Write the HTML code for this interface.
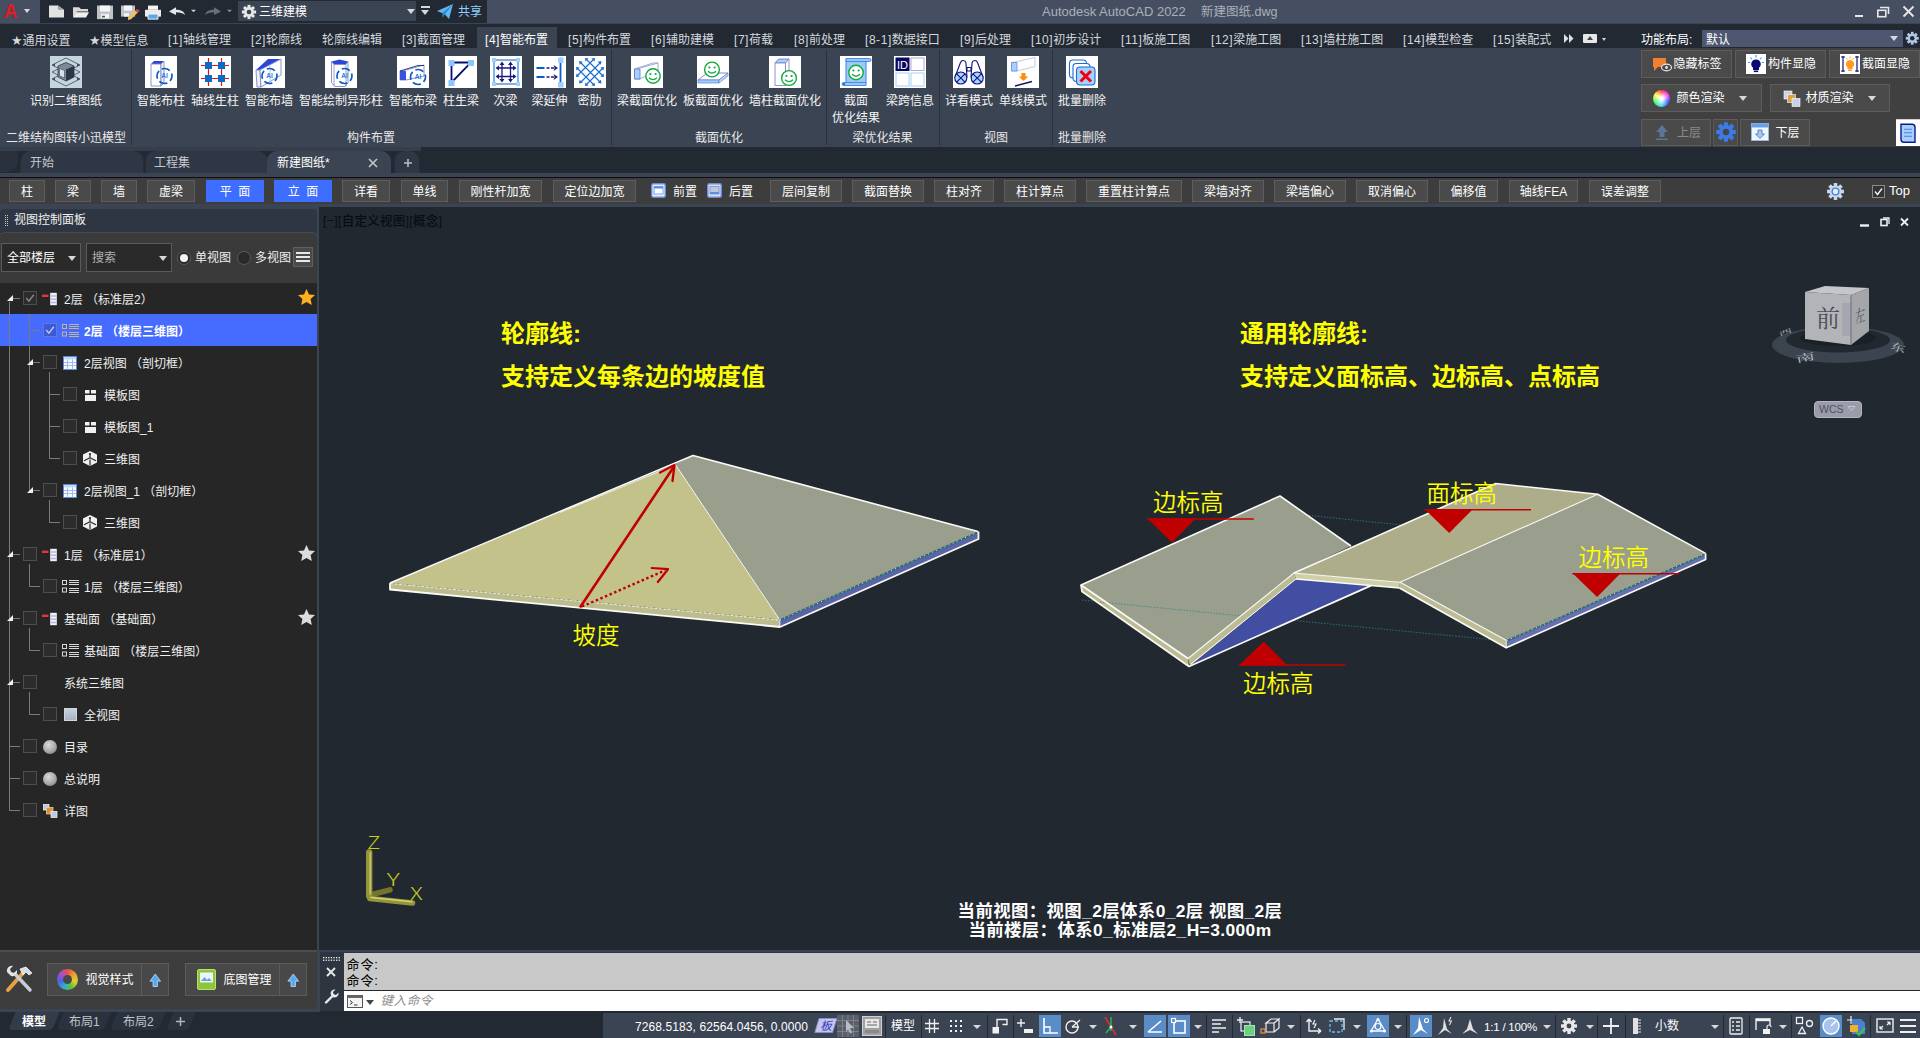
<!DOCTYPE html>
<html lang="zh-CN"><head><meta charset="utf-8"><title>Autodesk AutoCAD 2022 - 新建图纸.dwg</title>
<style>
*{margin:0;padding:0;box-sizing:border-box}
html,body{width:1920px;height:1038px;overflow:hidden;background:#212830}
body{font-family:"Liberation Sans","Noto Sans CJK SC",sans-serif;font-size:12px;color:#fff;position:relative}
.abs{position:absolute;display:block}
.t{position:absolute;white-space:nowrap;line-height:16px;font-size:13px}
i.tri{position:absolute;width:0;height:0;border-left:4.500px solid transparent;border-right:4.500px solid transparent;border-top:5px solid #d8d8d8}
i.tri.s{border-left-width:4px;border-right-width:4px;border-top-width:4.500px}
i.tri.dk{border-top-color:#444}
/* title */
#title{position:absolute;left:0;top:0;width:1920px;height:24px;background:#464f61;border-bottom:1px solid #3b4453}
.abtn{position:absolute;left:0;top:0;width:40px;height:23px;background:#464f61}
.alogo{position:absolute;left:4px;top:-2.500px;font-size:21px;font-weight:bold;color:#d8222c;line-height:26px;transform:scaleX(.9);transform-origin:left;text-shadow:0 0 1px #8a1018}
.qat{position:absolute;left:40px;top:0;width:447px;height:23px;background:#222933}
.wscombo{position:absolute;left:238px;top:1px;width:178px;height:20px;background:#3b4453}
/* tabs */
#tabs{position:absolute;left:0;top:24px;width:1920px;height:24px;background:#222933}
.tab{position:absolute;top:7.500px;font-size:12px;line-height:16px;white-space:nowrap;color:#d4d8de}
.tab.act{color:#fff}
.tab b.lp{font-weight:normal;letter-spacing:.55px}
.tab b.st{font-weight:normal;font-size:10.500px;display:inline-block;width:11.500px;text-align:center;vertical-align:1px}
.acttab{position:absolute;top:3px;height:21px;background:#3b4453}
/* ribbon */
#ribbon{position:absolute;left:0;top:48px;width:1920px;height:99px;background:#3b4453}
.rsep{position:absolute;top:2px;width:1px;height:95px;background:#2b323e}
.rl{position:absolute;top:44.800px;width:120px;text-align:center;font-size:12px;line-height:17px;color:#f4f4f4;white-space:nowrap}
.rl.pt{top:82.300px;width:140px;color:#e8e8e8}
.rp{position:absolute;left:1639.500px;top:0;width:280.500px;height:99px;background:#404040}
.rb{position:absolute;background:#4a4a4a;border:1px solid #5c5c5c}
.bt{position:absolute;font-size:12px;line-height:16px;color:#fff;white-space:nowrap}
/* doc tabs */
#doctabs{position:absolute;left:0;top:147px;width:1920px;height:30px;background:#222933;border-top:4px solid #222933;border-bottom:4px solid #3b4453}
.dtab{position:absolute;top:0;height:22px;background:#2f3744;border-radius:10px 10px 0 0;box-shadow:inset 1px 0 0 #272d38,inset -1px 0 0 #272d38}
.dtab.on{background:#3b4453;box-shadow:none}
.dtab span{position:absolute;top:3.800px;font-size:12px;line-height:16px;color:#c4c8d0;white-space:nowrap}
/* toolbar */
#tb{position:absolute;left:0;top:177px;width:1920px;height:31px;background:#3d3d3d;border-top:1.200px solid #0c0e12;border-bottom:4.800px solid #3b4453}
.tbb{position:absolute;top:1.500px;height:22.800px;background:#4a4a4a;border:1px solid #5e5e5e;font-size:12px;line-height:22.200px;text-align:center;color:#fff;white-space:nowrap}
.tbb.on{background:#3d6eff;border-color:#3d6eff}
.tbt{position:absolute;top:6.300px;font-size:12px;line-height:16px;color:#fff;white-space:nowrap}
/* left */
#left{position:absolute;left:0;top:208px;width:319.500px;height:803.500px;background:#3b4453;border-right:2.500px solid #3b4453}
.lhead{position:absolute;left:0;top:0.500px;width:316.500px;height:24px;background:#2f3643;border-radius:4px 4px 0 0}
.grip{position:absolute;left:5px;top:6.500px;width:1.200px;height:11px;background:repeating-linear-gradient(#c8c8c8 0 1.200px,transparent 1.200px 2px);box-shadow:none}
.grip:after{content:'';position:absolute;left:2.200px;top:0;width:1.200px;height:11px;background:repeating-linear-gradient(#c8c8c8 0 1.200px,transparent 1.200px 2px)}
.lctl{position:absolute;left:0;top:24px;width:316.500px;height:51px;background:#3a3a3a;border-radius:5px 5px 0 0;border-top:1px solid #4a4a4a}
.cmb{position:absolute;top:10px;height:29px;background:#2a2a2a;border:1px solid #5a5a5a}
.cmb span{position:absolute;left:5px;top:6px;font-size:12px;line-height:16px;color:#fff;white-space:nowrap}
.tree{position:absolute;left:0;top:75px;width:316.500px;height:667px;background:#262626;overflow:hidden}
.cb{position:absolute;width:14px;height:14px;background:#2c2c2c;border:1px solid #4e4e4e}
.tt{position:absolute;font-size:12px;line-height:17px;color:#f0f0f0;white-space:nowrap}
.lbot{position:absolute;left:0;top:742px;width:316.500px;height:58.500px;background:#3c3c3c;border-top:2px solid #4c4c4c;border-radius:0 0 4px 4px}
.lbb{position:absolute;top:11px;height:33px;background:#484848;border:1px solid #5c5c5c}
/* viewport */
#vp{position:absolute;left:319px;top:207px;width:1601px;height:743px;background:#212830;overflow:hidden}
/* cmd */
#cmd{position:absolute;left:319.500px;top:950px;width:1600.500px;height:61.500px;background:#2e3541;border-top:2.500px solid #3b4453;border-bottom:1px solid #222933}
.hist{position:absolute;left:24px;top:.5px;width:1577px;height:37px;background:#c8c8c8}
.inp{position:absolute;left:24px;top:37.500px;width:1577px;height:21px;background:#fff;border-top:1px solid #222933}
/* status */
#status{position:absolute;left:0;top:1011.500px;width:1920px;height:27px;background:#222933}
.mtab{position:absolute;top:.5px;height:17.500px;background:#2b323e;transform:skewX(-22deg);border-radius:0 0 4px 4px}
.mtab.on{background:#343c4a}
.sb{position:absolute;left:603px;top:1px;width:1317px;height:26px;background:#3b4453}
.vs{position:absolute;top:3px;width:1px;height:23px;background:#222933}

</style></head>
<body>
<div id="title">
<div class="abtn"><span class="alogo">A</span><i class="tri s" style="left:24px;top:9px;border-left-width:3.500px;border-right-width:3.500px"></i></div>
<div class="qat"></div>
<svg class="abs" style="left:48px;top:2.500px" width="200" height="17" viewBox="0 0 200 20" preserveAspectRatio="none">
<path d="M1 3h9l6 5v9H1z" fill="#e2e2e2"/><path d="M10 3v5h6z" fill="#9aa0a8"/>
<path d="M25 5h6l2 2h7v3H29l-4 7z" fill="#d8d8d8"/><path d="M28 11h13l-3 6H25z" fill="#efefef"/>
<path d="M49 3h16v16H49z" fill="#bfc3c8"/><path d="M52 3h10v7H52z" fill="#f4f4f4"/><path d="M53 13h8v5h-8z" fill="#f4f4f4"/><path d="M54 15h3v2h-3z" fill="#555"/>
<path d="M73 3h14v13H73z" fill="#bfc3c8"/><path d="M76 3h8v6h-8z" fill="#f4f4f4"/><path d="M76 12h5v4h-5z" fill="#f4f4f4"/><path d="M80 17l7-8 3 2-7 8-3 1z" fill="#f0c060"/><path d="M87 9l2-2 3 2-2 2z" fill="#e04848"/>
<path d="M100 3h10v5h-10z" fill="#f4f4f4"/><path d="M97 8h16v8H97z" fill="#ececec"/><path d="M100 13h10v6h-10z" fill="#5aa8e8" stroke="#f4f4f4" stroke-width="1"/>
<path d="M121 10l7-5v3c5 0 8 2 9 6-2-2-5-3-9-3v3z" fill="#e6e6e6"/>
<path d="M143 8h5l-2.500 3z" fill="#cfcfcf"/>
<path d="M173 10l-7-5v3c-5 0-8 2-9 6 2-2 5-3 9-3v3z" fill="#6a707a"/>
<path d="M179 8h5l-2.500 3z" fill="#8a8f98"/>
</svg>
<div class="wscombo"></div>
<svg class="abs" style="left:240.500px;top:3.500px" width="16" height="16" viewBox="0 0 18 18"><g fill="#e8e8e8"><circle cx="9" cy="9" r="5.500"/><g id="gt"><rect x="7.300" y="1" width="3.400" height="16"/></g><use href="#gt" transform="rotate(45 9 9)"/><use href="#gt" transform="rotate(90 9 9)"/><use href="#gt" transform="rotate(135 9 9)"/></g><circle cx="9" cy="9" r="2.600" fill="#3b4453"/></svg>
<span class="t" style="left:259px;top:4px;color:#fff;font-size:12px">三维建模</span>
<i class="tri" style="left:407px;top:9px"></i>
<i class="abs" style="left:421px;top:6px;width:9px;height:1.500px;background:#d8d8d8"></i><i class="tri" style="left:421px;top:10px"></i>
<svg class="abs" style="left:436px;top:3px" width="18" height="17" viewBox="0 0 18 17"><path d="M1 8L17 1l-4 15-4.500-5z" fill="#5fb6f2"/><path d="M17 1L6.500 10v5l2.300-3.700z" fill="#2f86c8"/></svg>
<span class="t" style="left:458px;top:4px;color:#8fd0ff;font-size:12px">共享</span>
<span class="t" style="left:1042px;top:4px;color:#a8afba;letter-spacing:0;font-size:13px">Autodesk AutoCAD 2022</span>
<span class="t" style="left:1201px;top:4px;color:#a8afba;font-size:12.500px">新建图纸.dwg</span>
<i class="abs" style="left:1855px;top:15px;width:8px;height:2px;background:#e8e8e8"></i>
<svg class="abs" style="left:1876px;top:6px" width="14" height="12" viewBox="0 0 14 12"><path d="M4 1.500h8.500v6.500" fill="none" stroke="#e8e8e8" stroke-width="1.600"/><rect x="1.800" y="4.300" width="8" height="6.400" fill="none" stroke="#e8e8e8" stroke-width="1.600"/></svg>
<svg class="abs" style="left:1902px;top:5px" width="13" height="13" viewBox="0 0 13 13"><path d="M1.500 1.500l10 10M11.500 1.500l-10 10" stroke="#e8e8e8" stroke-width="1.800"/></svg>
</div>
<div id="tabs">
<div class="acttab" style="left:477px;width:80px"></div>
<span class="tab" style="left:11px"><b class="st">★</b>通用设置</span>
<span class="tab" style="left:89px"><b class="st">★</b>模型信息</span>
<span class="tab" style="left:168px"><b class="lp">[1]</b>轴线管理</span>
<span class="tab" style="left:251px"><b class="lp">[2]</b>轮廓线</span>
<span class="tab" style="left:322px">轮廓线编辑</span>
<span class="tab" style="left:402px"><b class="lp">[3]</b>截面管理</span>
<span class="tab act" style="left:485px"><b class="lp">[4]</b>智能布置</span>
<span class="tab" style="left:568px"><b class="lp">[5]</b>构件布置</span>
<span class="tab" style="left:651px"><b class="lp">[6]</b>辅助建模</span>
<span class="tab" style="left:734px"><b class="lp">[7]</b>荷载</span>
<span class="tab" style="left:794px"><b class="lp">[8]</b>前处理</span>
<span class="tab" style="left:865px"><b class="lp">[8-1]</b>数据接口</span>
<span class="tab" style="left:960px"><b class="lp">[9]</b>后处理</span>
<span class="tab" style="left:1031px"><b class="lp">[10]</b>初步设计</span>
<span class="tab" style="left:1121px"><b class="lp">[11]</b>板施工图</span>
<span class="tab" style="left:1211px"><b class="lp">[12]</b>梁施工图</span>
<span class="tab" style="left:1301px"><b class="lp">[13]</b>墙柱施工图</span>
<span class="tab" style="left:1403px"><b class="lp">[14]</b>模型检查</span>
<span class="tab" style="left:1493px"><b class="lp">[15]</b>装配式</span>
<svg class="abs" style="left:1564px;top:10px" width="10" height="9" viewBox="0 0 10 9"><path d="M0 0l4.500 4.500L0 9zM5 0l4.500 4.500L5 9z" fill="#e0e0e0"/></svg>
<i class="abs" style="left:1583px;top:10px;width:14px;height:9px;background:#e8e8e8;border-radius:1px"></i><i class="abs" style="left:1587px;top:12px;border:3px solid transparent;border-top:0;border-bottom:4px solid #444;width:0;height:0"></i>
<i class="tri s" style="left:1601.500px;top:14px;border-left-width:2.700px;border-right-width:2.700px;border-top-width:3.200px"></i>
<span class="tab" style="left:1641px;color:#fff">功能布局:</span>
<div class="abs" style="left:1702px;top:5.500px;width:200.500px;height:17.500px;background:#4d5870"></div>
<span class="tab" style="left:1706px;color:#fff;top:7.500px">默认</span>
<i class="tri" style="left:1890px;top:12px"></i>
<svg class="abs" style="left:1904.500px;top:6.500px" width="14.500" height="14.500" viewBox="0 0 18 18"><g fill="#b4c8ea"><circle cx="9" cy="9" r="5.500"/><use href="#gt"/><use href="#gt" transform="rotate(45 9 9)"/><use href="#gt" transform="rotate(90 9 9)"/><use href="#gt" transform="rotate(135 9 9)"/></g><circle cx="9" cy="9" r="2.800" fill="#222933"/></svg>
</div>
<div id="ribbon">
<i class="rsep" style="left:131px"></i>
<i class="rsep" style="left:611px"></i>
<i class="rsep" style="left:826px"></i>
<i class="rsep" style="left:939px"></i>
<i class="rsep" style="left:1052px"></i>
<svg class="abs" style="left:50px;top:8px" width="32" height="32" viewBox="0 0 32 32"><rect width="32" height="32" fill="#c6d6de"/><g fill="none" stroke="#3c4a5a" stroke-width="0.800"><path d="M16 2L30 9 16 16 2 9z"/><path d="M16 9L30 16 16 23 2 16z"/><path d="M16 16L30 23 16 30 2 23z"/></g><path d="M8 10l8-3.500 8 3.500v11l-8 4-8-4z" fill="#7c8a98" stroke="#2c3540" stroke-width="0.800"/><path d="M16 13.500l8-3.500v11l-8 4z" fill="#2c3644"/><path d="M9.500 12.500l5 2v7.500l-5-2.300z" fill="#d8e2e8" stroke="#3c4a5a" stroke-width="0.600"/><path d="M2 9l3-1.500v3zM30 9l-3-1.500v3zM2 23l3-1.500v3zM30 23l-3-1.500v3z" fill="#3c4a5a"/></svg>
<span class="rl" style="left:6px">识别二维图纸</span>
<svg class="abs" style="left:145px;top:8px" width="32" height="32" viewBox="0 0 32 32"><rect width="32" height="32" fill="#fff"/><path d="M6 8l3-3h10l-3 3z" fill="#2a46d8"/><path d="M6 8h10v22H6z" fill="#fff" stroke="#8088c0" stroke-width="0.900"/><path d="M16 8l3-3v22l-3 3z" fill="#eef0fa" stroke="#8088c0" stroke-width="0.900"/><circle cx="19.5" cy="20" r="7.500" fill="none" stroke="#0a5cc8" stroke-width="1.700" stroke-dasharray="8.500 3.300" stroke-dashoffset="3"/><text x="19.5" y="22.4" font-size="6.500" font-weight="bold" fill="#2b7be0" text-anchor="middle" font-family="Liberation Sans, sans-serif">AI</text></svg>
<span class="rl" style="left:101px">智能布柱</span>
<svg class="abs" style="left:199px;top:8px" width="32" height="32" viewBox="0 0 32 32"><rect width="32" height="32" fill="#fff"/><path d="M2 9.500h28M2 22.500h28M9.500 2v28M22.500 2v28" stroke="#e81010" stroke-width="1.200"/><g fill="#0a6ac8"><rect x="6" y="6" width="7" height="7"/><rect x="19" y="6" width="7" height="7"/><rect x="6" y="19" width="7" height="7"/><rect x="19" y="19" width="7" height="7"/></g></svg>
<span class="rl" style="left:155px">轴线生柱</span>
<svg class="abs" style="left:253px;top:8px" width="32" height="32" viewBox="0 0 32 32"><rect width="32" height="32" fill="#fff"/><path d="M3 14L15 3h13L7 14z" fill="#2a46d8"/><path d="M3 14h4l1 17H4z" fill="#eef0fa" stroke="#8088c0" stroke-width="0.900"/><path d="M7 14L28 3v16L8 31z" fill="#fff" stroke="#8088c0" stroke-width="0.900"/><path d="M17 8.500v17.500" stroke="#b0b6d8" stroke-width="0.800"/><circle cx="16.5" cy="20" r="7.500" fill="none" stroke="#0a5cc8" stroke-width="1.700" stroke-dasharray="8.500 3.300" stroke-dashoffset="3"/><text x="16.5" y="22.4" font-size="6.500" font-weight="bold" fill="#2b7be0" text-anchor="middle" font-family="Liberation Sans, sans-serif">AI</text></svg>
<span class="rl" style="left:209px">智能布墙</span>
<svg class="abs" style="left:325px;top:8px" width="32" height="32" viewBox="0 0 32 32"><rect width="32" height="32" fill="#fff"/><path d="M6.500 5.500l8-2 8.500 2-2 3h-12z" fill="#2a46d8"/><path d="M6.500 5.500l2.500 3h12l2-3v21l-3 4h-10l-3.500-4z" fill="#fff" stroke="#8088c0" stroke-width="0.900"/><path d="M9 8.500v22M21 8.500v22" stroke="#8088c0" stroke-width="0.800"/><circle cx="19.5" cy="20" r="7.500" fill="none" stroke="#0a5cc8" stroke-width="1.700" stroke-dasharray="8.500 3.300" stroke-dashoffset="3"/><text x="19.5" y="22.4" font-size="6.500" font-weight="bold" fill="#2b7be0" text-anchor="middle" font-family="Liberation Sans, sans-serif">AI</text></svg>
<span class="rl" style="left:281px">智能绘制异形柱</span>
<svg class="abs" style="left:397px;top:8px" width="32" height="32" viewBox="0 0 32 32"><rect width="32" height="32" fill="#fff"/><path d="M3 15l6-1L27 9v11l-18 4-6 0z" fill="#fff" stroke="#8088c0" stroke-width="0.900"/><path d="M3 15h6v9H3z" fill="#3a50e0"/><path d="M3 15L21 9.500h6" fill="none" stroke="#1a2a80" stroke-width="0.900"/><circle cx="21" cy="21" r="7.500" fill="none" stroke="#0a5cc8" stroke-width="1.700" stroke-dasharray="8.500 3.300" stroke-dashoffset="3"/><text x="21" y="23.4" font-size="6.500" font-weight="bold" fill="#2b7be0" text-anchor="middle" font-family="Liberation Sans, sans-serif">AI</text></svg>
<span class="rl" style="left:353px">智能布梁</span>
<svg class="abs" style="left:445px;top:8px" width="32" height="32" viewBox="0 0 32 32"><rect width="32" height="32" fill="#fff"/><path d="M6.500 6.500h19.500L6.500 26.500z" fill="none" stroke="#0c0c6e" stroke-width="1.800"/><g fill="#8cc6ff"><rect x="3.500" y="4" width="6" height="6"/><rect x="23" y="4" width="6" height="6"/><rect x="3.500" y="24" width="6" height="6"/></g></svg>
<span class="rl" style="left:401px">柱生梁</span>
<svg class="abs" style="left:489.5px;top:8px" width="32" height="32" viewBox="0 0 32 32"><rect width="32" height="32" fill="#fff"/><path d="M4 4v24M28 4v24" stroke="#5aa6ee" stroke-width="1.600"/><path d="M5 4h22M5 28h22" stroke="#0a5cc8" stroke-width="1.200"/><g fill="#9cd0ff"><rect x="2" y="2" width="4" height="4"/><rect x="26" y="2" width="4" height="4"/><rect x="2" y="26" width="4" height="4"/><rect x="26" y="26" width="4" height="4"/></g><g stroke="#1a1a78" stroke-width="1.300" fill="none"><path d="M7 12h18M7 20.500h18M12 7v18M20.500 7v18"/></g><g fill="#1a1a78"><path d="M5.500 12l3.500-2.500v5zM26.500 12l-3.500-2.500v5zM5.500 20.500l3.500-2.500v5zM26.500 20.500l-3.500-2.500v5zM12 5.500l-2.500 3.500h5zM20.500 5.500l-2.500 3.500h5zM12 26.500l-2.500-3.500h5zM20.500 26.500l-2.500-3.500h5z"/></g></svg>
<span class="rl" style="left:445.5px">次梁</span>
<svg class="abs" style="left:533.5px;top:8px" width="32" height="32" viewBox="0 0 32 32"><rect width="32" height="32" fill="#fff"/><path d="M26.500 5v22" stroke="#0a5cc8" stroke-width="1.800"/><rect x="24" y="1.500" width="5.500" height="5.500" fill="#9cd0ff"/><rect x="24" y="26" width="5.500" height="5.500" fill="#9cd0ff"/><path d="M2.500 12h8M2.500 21h8" stroke="#0a5cc8" stroke-width="1.800"/><path d="M12.500 12h3M17 12h3M12.500 21h3M17 21h3" stroke="#1a1a78" stroke-width="1.500"/><path d="M24 12l-4.500-3 1.200 3-1.200 3zM24 21l-4.500-3 1.200 3-1.200 3z" fill="#1a1a78"/></svg>
<span class="rl" style="left:489.5px">梁延伸</span>
<svg class="abs" style="left:573.5px;top:8px" width="32" height="32" viewBox="0 0 32 32"><rect width="32" height="32" fill="#fff"/><g stroke="#1a6cd0" stroke-width="1.100"><path d="M3 12L20 29M6.500 6.500l20 20M12 3l17 17M20 3L3 20M26.500 6.500l-20 20M29 12L12 29"/></g><g fill="#1a6cd0"><path d="M2 11l3.500.5-3 3zM21 30l-3.500-.5 3-3zM5 5l3.800.7-3.100 3.100zM27.500 27.500l-3.800-.7 3.100-3.100zM11 2l3.500.5-3 3zM30 21l-.5-3.500-3 3zM21 2l-3.500.5 3 3zM2 21l.5-3.500 3 3zM27.500 5l-3.800.7 3.100 3.100zM5 27.500l.7-3.800 3.100 3.100zM30 11l-3.500.5 3 3zM11 30l3.500-.5-3-3z"/></g></svg>
<span class="rl" style="left:529.5px">密肋</span>
<svg class="abs" style="left:631px;top:8px" width="32" height="32" viewBox="0 0 32 32"><rect width="32" height="32" fill="#fff"/><path d="M3.500 13L9 12l18-5v9l-10 3-8 4H3.500z" fill="#fff" stroke="#9aa0d0" stroke-width="0.900"/><path d="M3.500 13H9v10H3.500z" fill="#a8d0ff" stroke="#5a70d0" stroke-width="0.800"/><path d="M3.500 13L22 7h5" fill="none" stroke="#9aa0d0" stroke-width="0.900"/><circle cx="22" cy="20" r="7.2" fill="#fff" stroke="#11a83c" stroke-width="1.400"/><circle cx="19.4" cy="18" r="1.100" fill="#11a83c"/><circle cx="24.6" cy="18" r="1.100" fill="#11a83c"/><path d="M18 21.8q4 3.600 8 0" fill="none" stroke="#11a83c" stroke-width="1.300"/></svg>
<span class="rl" style="left:587px">梁截面优化</span>
<svg class="abs" style="left:697px;top:8px" width="32" height="32" viewBox="0 0 32 32"><rect width="32" height="32" fill="#fff"/><path d="M1 24L10 17h21l-9 7z" fill="#fff" stroke="#7a80c8" stroke-width="0.900"/><path d="M1 24h21v3H1z" fill="#9cd0ff" stroke="#5a70d0" stroke-width="0.600"/><path d="M22 24l9-7v3l-9 7z" fill="#b8dcff" stroke="#5a70d0" stroke-width="0.600"/><circle cx="15" cy="13.5" r="7.4" fill="#fff" stroke="#11a83c" stroke-width="1.400"/><circle cx="12.4" cy="11.5" r="1.100" fill="#11a83c"/><circle cx="17.6" cy="11.5" r="1.100" fill="#11a83c"/><path d="M11 15.3q4 3.600 8 0" fill="none" stroke="#11a83c" stroke-width="1.300"/></svg>
<span class="rl" style="left:653px">板截面优化</span>
<svg class="abs" style="left:769px;top:8px" width="32" height="32" viewBox="0 0 32 32"><rect width="32" height="32" fill="#fff"/><path d="M6 7l3.500-4H20l-3.500 4z" fill="#a8d0ff" stroke="#5a70d0" stroke-width="0.800"/><path d="M6 7h10.500v22.500H6z" fill="#fff" stroke="#8088c0" stroke-width="0.900"/><path d="M16.500 7L20 3v22l-3.500 4.500z" fill="#fff" stroke="#8088c0" stroke-width="0.900"/><circle cx="20" cy="22" r="7.4" fill="#fff" stroke="#11a83c" stroke-width="1.400"/><circle cx="17.4" cy="20" r="1.100" fill="#11a83c"/><circle cx="22.6" cy="20" r="1.100" fill="#11a83c"/><path d="M16 23.8q4 3.600 8 0" fill="none" stroke="#11a83c" stroke-width="1.300"/></svg>
<span class="rl" style="left:725px">墙柱截面优化</span>
<svg class="abs" style="left:840px;top:8px" width="32" height="32" viewBox="0 0 32 32"><rect width="32" height="32" fill="#fff"/><path d="M6 3.500h20v24H6z" fill="#9ccaf8" stroke="#3a86e0" stroke-width="1"/><path d="M6 2.500h23.500a1.500 1.500 0 010 3H6z" fill="#9ccaf8" stroke="#3a86e0" stroke-width="0.900"/><path d="M3.500 26.500H26v3H3.500a1.500 1.500 0 010-3z" fill="#9ccaf8" stroke="#3a86e0" stroke-width="0.900"/><circle cx="4" cy="28" r="1.200" fill="#2a6cc8"/><circle cx="16" cy="16.5" r="7.2" fill="#fff" stroke="#11a83c" stroke-width="1.400"/><circle cx="13.4" cy="14.5" r="1.100" fill="#11a83c"/><circle cx="18.6" cy="14.5" r="1.100" fill="#11a83c"/><path d="M12 18.3q4 3.600 8 0" fill="none" stroke="#11a83c" stroke-width="1.300"/></svg>
<span class="rl" style="left:796px">截面<br>优化结果</span>
<svg class="abs" style="left:894px;top:8px" width="32" height="32" viewBox="0 0 32 32"><rect width="32" height="32" fill="#fff"/><rect x="1.500" y="1.500" width="14" height="13.500" fill="#07075e"/><text x="8.500" y="12.500" font-size="11" fill="#fff" text-anchor="middle" font-family="Liberation Sans, sans-serif">ID</text><rect x="17" y="2" width="13" height="12.500" fill="#fff" stroke="#b0a8d8" stroke-width="1"/><rect x="2" y="17" width="13" height="13" fill="#fff" stroke="#a8d0f4" stroke-width="1"/><rect x="17" y="17" width="13" height="13" fill="#fff" stroke="#a8d0f4" stroke-width="1"/></svg>
<span class="rl" style="left:850px">梁跨信息</span>
<svg class="abs" style="left:953px;top:8px" width="32" height="32" viewBox="0 0 32 32"><rect width="32" height="32" fill="#fff"/><g fill="#fff" stroke="#12127a" stroke-width="1.100"><path d="M14 11.500h4v3.500h-4z"/><path d="M2 21L7.500 6.500a2.800 2.800 0 015.400.2L14 21zM30 21L24.500 6.500a2.800 2.800 0 00-5.400.2L18 21z"/></g><g fill="#a8d4ff" stroke="#12127a" stroke-width="1.100"><circle cx="7.800" cy="22" r="6"/><circle cx="24.200" cy="22" r="6"/></g><path d="M3.600 17.800l8.400 8.400M12 17.800l-8.400 8.400M20 17.800l8.400 8.400M28.400 17.800L20 26.200" stroke="#12127a" stroke-width="1.100"/></svg>
<span class="rl" style="left:909px">详看模式</span>
<svg class="abs" style="left:1007px;top:8px" width="32" height="32" viewBox="0 0 32 32"><rect width="32" height="32" fill="#fff"/><path d="M4.500 6.500L10 5.500 28 1.500v9L10 15H4.500z" fill="#fff" stroke="#c0c4e0" stroke-width="0.900"/><path d="M4.500 6.500H10V15H4.500z" fill="#a8d0ff" stroke="#6a8ae0" stroke-width="0.800"/><path d="M14.500 17h4v3.500h2.700l-4.700 4.500-4.700-4.500h2.700z" fill="#ff8c00"/><path d="M8 30l17-4.500" stroke="#12125a" stroke-width="1.300"/></svg>
<span class="rl" style="left:963px">单线模式</span>
<svg class="abs" style="left:1066px;top:8px" width="32" height="32" viewBox="0 0 32 32"><rect width="32" height="32" fill="#fff"/><g stroke="#1a6cd0" stroke-width="1.100"><rect x="3.500" y="4" width="17" height="18" rx="3.500" fill="#fff"/><rect x="7" y="7.500" width="17" height="18" rx="3.500" fill="#fff"/><rect x="10.500" y="11" width="18.500" height="18" rx="3.500" fill="#a8d0ff"/></g><path d="M14.500 15l10.500 10.500M25 15L14.500 25.500" stroke="#f00010" stroke-width="3"/></svg>
<span class="rl" style="left:1022px">批量删除</span>
<span class="rl pt" style="left:-4px">二维结构图转小迅模型</span>
<span class="rl pt" style="left:301px">构件布置</span>
<span class="rl pt" style="left:649px">截面优化</span>
<span class="rl pt" style="left:812.5px">梁优化结果</span>
<span class="rl pt" style="left:926px">视图</span>
<span class="rl pt" style="left:1012px">批量删除</span>
<div class="rp">
<div class="rb " style="left:1px;top:2px;width:91px;height:27.5px"><svg class="abs" style="left:10px;top:6px" width="22" height="16" viewBox="0 0 22 16"><path d="M1 1h13v9H6l-4 4v-4H1z" fill="#f08030"/><ellipse cx="14.500" cy="10.500" rx="5" ry="3.300" fill="#4a4a4a" stroke="#e8e8e8" stroke-width="1.200"/><circle cx="14.500" cy="10.500" r="1.400" fill="#e8e8e8"/></svg><span class="bt" style="left:32px;top:5px">隐藏标签</span></div>
<div class="rb " style="left:95.5px;top:2px;width:91px;height:27.5px"><svg class="abs" style="left:10px;top:3px" width="20" height="20" viewBox="0 0 20 20"><rect width="20" height="20" fill="#fff"/><path d="M10 5.500a4.600 4.600 0 013 8.200V16H7v-2.300a4.600 4.600 0 013-8.200z" fill="#0a0a70"/><rect x="7.800" y="16.500" width="4.400" height="1.600" fill="#0a0a70"/><path d="M10 1v2.500M4.500 3.500l1.600 1.800M15.500 3.500l-1.600 1.800M2 8.500h2.200M18 8.500h-2.200" stroke="#38a0f0" stroke-width="1.100"/></svg><span class="bt" style="left:32px;top:5px">构件显隐</span></div>
<div class="rb " style="left:189.5px;top:2px;width:91px;height:27.5px"><svg class="abs" style="left:10px;top:3px" width="20" height="20" viewBox="0 0 20 20"><rect width="20" height="20" fill="#fff"/><path d="M3 2v16M17 2v16M1 3h4M15 3h4M1 17h4M15 17h4" stroke="#12127a" stroke-width="1.200"/><path d="M10 6a4 4 0 012.500 7.200V15h-5v-1.800A4 4 0 0110 6z" fill="#ff9a1a"/><rect x="8" y="15.500" width="4" height="1.500" fill="#ff9a1a"/><path d="M10 2.500v2M6.300 4l1 1.500M13.700 4l-1 1.500" stroke="#ff9a1a" stroke-width="1"/></svg><span class="bt" style="left:32px;top:5px">截面显隐</span></div>
<div class="rb " style="left:1px;top:36px;width:121px;height:27.5px"><div class="abs" style="left:11px;top:5px;width:17px;height:17px;border-radius:50%;background:radial-gradient(circle,#fff 0,#fff 12%,rgba(255,255,255,0) 62%),conic-gradient(#ff4040,#ff40ff,#4060ff,#40e0ff,#40ff60,#ffff40,#ff4040)"></div><span class="bt" style="left:35px;top:5px">颜色渲染</span><i class="tri" style="left:97px;top:11px"></i></div>
<div class="rb " style="left:130px;top:36px;width:120px;height:27.5px"><svg class="abs" style="left:12px;top:5px" width="18" height="17" viewBox="0 0 18 17"><rect x="1" y="1" width="8" height="8" fill="#c8d0e8" stroke="#fff" stroke-width="0.600"/><rect x="4.500" y="4.500" width="8" height="8" fill="#e0a040" stroke="#fff" stroke-width="0.600"/><rect x="9" y="8.500" width="8" height="8" fill="#c8d0e8" stroke="#fff" stroke-width="0.600"/></svg><span class="bt" style="left:35px;top:5px">材质渲染</span><i class="tri" style="left:97px;top:11px"></i></div>
<div class="rb " style="left:1px;top:70.5px;width:70px;height:27.5px"><svg class="abs" style="left:13px;top:4.500px" width="14" height="17" viewBox="0 0 14 17"><path d="M7 1l6 7H9.500v5h-5V8H1z" fill="#5a7896"/><rect x="1" y="14.500" width="12" height="1.500" fill="#5a7896"/></svg><span class="bt" style="left:35.500px;top:5px;color:#8a8a8a">上层</span></div>
<div class="rb " style="left:73.5px;top:70.5px;width:25px;height:27.5px"><svg class="abs" style="left:0.500px;top:1.500px" width="22" height="22" viewBox="0 0 18 18"><g fill="#3d7ae8"><circle cx="9" cy="9" r="5.800"/><use href="#gt"/><use href="#gt" transform="rotate(45 9 9)"/><use href="#gt" transform="rotate(90 9 9)"/><use href="#gt" transform="rotate(135 9 9)"/></g><circle cx="9" cy="9" r="2.600" fill="#454545"/></svg></div>
<div class="rb " style="left:100px;top:70.5px;width:70px;height:27.5px"><svg class="abs" style="left:10.500px;top:3.500px" width="18" height="18" viewBox="0 0 18 18"><rect x=".5" y=".5" width="17" height="17" fill="#f0f6ff" stroke="#9ab8e0"/><rect x=".5" y=".5" width="17" height="4" fill="#6aa0e8"/><path d="M7 7h4v4h2.500L9 15.500 4.500 11H7z" fill="#a8c8f0" stroke="#3a70c8" stroke-width="0.800"/></svg><span class="bt" style="left:35px;top:5px">下层</span></div>
<svg class="abs" style="left:256.500px;top:70.500px" width="25" height="27.500" viewBox="0 0 25 27"><rect width="25" height="27" fill="#fff"/><path d="M5 5h11a3 3 0 013 3v15H8a3 3 0 01-3-3z" fill="#a8d0ff" stroke="#0a1a90" stroke-width="1.400"/><path d="M8 10h8M8 13.500h8M8 17h8" stroke="#4a80e0" stroke-width="1"/></svg>
</div>
</div>
<div id="doctabs">
<div class="abs" style="left:0;top:-4px;width:421px;height:3.500px;background:#363e4c"></div><div class="abs" style="left:-14px;top:0;width:32px;height:21px;background:#2a303c;border-radius:0 0 12px 12px"></div>
<div class="dtab" style="left:20px;width:124px"><span style="left:10px">开始</span></div>
<div class="dtab" style="left:144.500px;width:123px"><span style="left:9.500px">工程集</span></div>
<div class="dtab on" style="left:267px;width:124px"><span style="left:10px;color:#fff">新建图纸*</span></div>
<svg class="abs" style="left:368px;top:6.500px" width="10" height="10" viewBox="0 0 10 10"><path d="M1 1l8 8M9 1L1 9" stroke="#c8c8c8" stroke-width="1.600"/></svg>
<div class="dtab" style="left:394px;width:26px"></div>
<svg class="abs" style="left:403px;top:7px" width="10" height="10" viewBox="0 0 10 10"><path d="M5 1v8M1 5h8" stroke="#b8bcc4" stroke-width="1.600"/></svg>
</div>
<div id="tb">
<div class="tbb" style="left:9px;width:36px">柱</div>
<div class="tbb" style="left:55px;width:36px">梁</div>
<div class="tbb" style="left:101px;width:36px">墙</div>
<div class="tbb" style="left:147px;width:48px">虚梁</div>
<div class="tbb on" style="left:206px;width:58px">平&nbsp;&nbsp;面</div>
<div class="tbb on" style="left:274px;width:58px">立&nbsp;&nbsp;面</div>
<div class="tbb" style="left:342px;width:48px">详看</div>
<div class="tbb" style="left:401px;width:47px">单线</div>
<div class="tbb" style="left:459px;width:83px">刚性杆加宽</div>
<div class="tbb" style="left:553px;width:83px">定位边加宽</div>
<div class="tbb" style="left:770px;width:72px">层间复制</div>
<div class="tbb" style="left:852px;width:72px">截面替换</div>
<div class="tbb" style="left:934px;width:60px">柱对齐</div>
<div class="tbb" style="left:1004px;width:72px">柱计算点</div>
<div class="tbb" style="left:1086px;width:96px">重置柱计算点</div>
<div class="tbb" style="left:1192px;width:72px">梁墙对齐</div>
<div class="tbb" style="left:1274px;width:72px">梁墙偏心</div>
<div class="tbb" style="left:1356px;width:72px">取消偏心</div>
<div class="tbb" style="left:1439px;width:59px">偏移值</div>
<div class="tbb" style="left:1509px;width:69px">轴线FEA</div>
<div class="tbb" style="left:1589px;width:72px">误差调整</div>
<svg class="abs" style="left:651px;top:5px" width="15" height="15" viewBox="0 0 15 15"><rect x=".7" y=".7" width="13.600" height="13.600" rx="1.500" fill="#e8f0ff" stroke="#6a8ad8" stroke-width="1.400"/><rect x="3" y="3.500" width="9" height="7.500" fill="#fff" stroke="#7aa8e8" stroke-width="1"/><rect x="3" y="3.500" width="9" height="2" fill="#5a90e0"/></svg>
<span class="tbt" style="left:673px">前置</span>
<svg class="abs" style="left:707px;top:5px" width="15" height="15" viewBox="0 0 15 15"><rect x=".7" y=".7" width="13.600" height="13.600" rx="1.500" fill="#d8e0f4" stroke="#6a8ad8" stroke-width="1.400"/><rect x="3" y="3.500" width="9" height="7.500" fill="#c0c8e0" stroke="#8a9ad0" stroke-width="1"/><rect x="3" y="9" width="9" height="2" fill="#5a90e0"/></svg>
<span class="tbt" style="left:729px">后置</span>
<svg class="abs" style="left:1826px;top:4px" width="19" height="19" viewBox="0 0 18 18"><g fill="#c8d8f0"><circle cx="9" cy="9" r="5.800"/><use href="#gt"/><use href="#gt" transform="rotate(45 9 9)"/><use href="#gt" transform="rotate(90 9 9)"/><use href="#gt" transform="rotate(135 9 9)"/></g><circle cx="9" cy="9" r="3.800" fill="#4a80d8"/><circle cx="9" cy="9" r="2.500" fill="#e8eef8"/></svg>
<div class="abs" style="left:1872px;top:7px;width:12.500px;height:12.500px;border:1px solid #8a8a8a;background:#333"></div><svg class="abs" style="left:1873px;top:8px" width="11" height="11" viewBox="0 0 11 11"><path d="M2 5.500l2.500 3L9 2.500" fill="none" stroke="#f0f0f0" stroke-width="1.400"/></svg>
<span class="tbt" style="left:1889px;font-size:13px;top:5px">Top</span>
</div>
<div id="left">
<div class="lhead"><i class="grip"></i><span class="t" style="left:14px;top:3.200px;color:#f0f0f0;font-size:12px">视图控制面板</span></div>
<div class="lctl">
<div class="cmb" style="left:1px;width:80px"><span>全部楼层</span><i class="tri" style="left:66px;top:12px"></i></div>
<div class="cmb" style="left:86px;width:86px"><span style="color:#b0b0b0">搜索</span><i class="tri" style="left:72px;top:12px"></i></div>
<div class="abs" style="left:177px;top:18px;width:14px;height:14px;border-radius:50%;background:#2a2a2a;border:1px solid #585858;box-sizing:border-box"></div><div class="abs" style="left:179.800px;top:20.800px;width:8.400px;height:8.400px;border-radius:50%;background:#f6f6f6"></div>
<span class="t" style="left:195px;top:17px;color:#f0f0f0;font-size:12px">单视图</span>
<div class="abs" style="left:236.700px;top:18px;width:14px;height:14px;border-radius:50%;background:#2a2a2a;border:1px solid #585858;box-sizing:border-box"></div>
<span class="t" style="left:255px;top:17px;color:#f0f0f0;font-size:12px">多视图</span>
<div class="abs" style="left:293px;top:14px;width:20px;height:20px;background:#4a4a4a;border:1px solid #606060;box-sizing:border-box"></div><i class="abs" style="left:296px;top:19px;width:14px;height:2px;background:#e8e8e8;box-shadow:0 4px 0 #e8e8e8,0 8px 0 #e8e8e8"></i>
</div>
<div class="tree">
<div class="abs" style="left:0;top:31px;width:316.500px;height:32px;background:#456bff"></div>
<i class="abs" style="left:9px;top:19px;width:1px;height:508px;background:#7a7a7a"></i>
<i class="abs" style="left:9px;top:15px;width:11px;height:1px;background:#7a7a7a"></i>
<i class="abs" style="left:9px;top:271px;width:11px;height:1px;background:#7a7a7a"></i>
<i class="abs" style="left:9px;top:335px;width:11px;height:1px;background:#7a7a7a"></i>
<i class="abs" style="left:9px;top:399px;width:11px;height:1px;background:#7a7a7a"></i>
<i class="abs" style="left:9px;top:463px;width:11px;height:1px;background:#7a7a7a"></i>
<i class="abs" style="left:9px;top:495px;width:11px;height:1px;background:#7a7a7a"></i>
<i class="abs" style="left:9px;top:527px;width:11px;height:1px;background:#7a7a7a"></i>
<i class="abs" style="left:29px;top:31px;width:1px;height:176px;background:#7a7a7a"></i>
<i class="abs" style="left:29px;top:47px;width:11px;height:1px;background:#7a7a7a"></i>
<i class="abs" style="left:29px;top:79px;width:11px;height:1px;background:#7a7a7a"></i>
<i class="abs" style="left:29px;top:207px;width:11px;height:1px;background:#7a7a7a"></i>
<i class="abs" style="left:49px;top:89px;width:1px;height:86px;background:#7a7a7a"></i>
<i class="abs" style="left:49px;top:111px;width:11px;height:1px;background:#7a7a7a"></i>
<i class="abs" style="left:49px;top:143px;width:11px;height:1px;background:#7a7a7a"></i>
<i class="abs" style="left:49px;top:175px;width:11px;height:1px;background:#7a7a7a"></i>
<i class="abs" style="left:49px;top:217px;width:1px;height:22px;background:#7a7a7a"></i>
<i class="abs" style="left:49px;top:239px;width:11px;height:1px;background:#7a7a7a"></i>
<i class="abs" style="left:29px;top:281px;width:1px;height:22px;background:#7a7a7a"></i>
<i class="abs" style="left:29px;top:303px;width:11px;height:1px;background:#7a7a7a"></i>
<i class="abs" style="left:29px;top:345px;width:1px;height:22px;background:#7a7a7a"></i>
<i class="abs" style="left:29px;top:367px;width:11px;height:1px;background:#7a7a7a"></i>
<i class="abs" style="left:29px;top:409px;width:1px;height:22px;background:#7a7a7a"></i>
<i class="abs" style="left:29px;top:431px;width:11px;height:1px;background:#7a7a7a"></i>
<svg class="abs" style="left:7.2px;top:12.2px" width="6" height="6" viewBox="0 0 7 7"><path d="M7 0v7H0z" fill="#f0f0f0"/></svg>
<div class="cb" style="left:23px;top:8px"></div>
<svg class="abs" style="left:23px;top:8px" width="14" height="14" viewBox="0 0 13 13"><path d="M3 6.500l2.500 3L10 3.500" fill="none" stroke="#8a8a8a" stroke-width="1.300"/></svg>
<svg class="abs" style="left:43px;top:8.5px;overflow:visible" width="15" height="14" viewBox="0 0 15 14"><rect x="-1" y="2.600" width="6.500" height="2.400" fill="#e03838"/><rect x="7.200" y="0.800" width="6.600" height="12.400" fill="#f0f2fc"/><path d="M8 4h5M8 7.200h5M8 10.400h5" stroke="#b4b8e0" stroke-width="1.500"/></svg>
<span class="tt" style="left:64px;top:8.5px;">2层 （标准层2）</span>
<svg class="abs" style="left:298px;top:6px" width="17" height="16" viewBox="0 0 17 16"><path d="M8.500 0l2.500 5.400 6 .7-4.400 4 1.200 5.900-5.300-3-5.300 3 1.200-5.900L0 6.100l6-.7z" fill="#ffb020"/></svg>
<div class="abs" style="left:43px;top:40px;width:14px;height:14px;background:#3e5ad0;border:1px solid #5a78e8;box-sizing:border-box"></div>
<svg class="abs" style="left:43px;top:40px" width="14" height="14" viewBox="0 0 13 13"><path d="M3 6.500l2.500 3L10 3.500" fill="none" stroke="#b8c8ff" stroke-width="1.300"/></svg>
<svg class="abs" style="left:62px;top:41.0px" width="17" height="13" viewBox="0 0 17 13"><g fill="none" stroke="#c8b48c" stroke-width="1"><rect x=".5" y=".5" width="4" height="4"/><rect x=".5" y="8" width="4" height="4"/></g><path d="M7 .5h10M7 2.500h10M7 4.500h10M7 8.500h10M7 10.500h10M7 12.500h10" stroke="#c8b48c" stroke-width="1"/></svg>
<span class="tt" style="left:84px;top:40.5px;font-weight:bold;color:#fff;">2层 （楼层三维图）</span>
<svg class="abs" style="left:27.2px;top:76.2px" width="6" height="6" viewBox="0 0 7 7"><path d="M7 0v7H0z" fill="#f0f0f0"/></svg>
<div class="cb" style="left:43px;top:72px"></div>
<svg class="abs" style="left:63px;top:72.5px" width="14" height="14" viewBox="0 0 14 14"><rect x=".5" y=".5" width="13" height="13" fill="#f6f9ff" stroke="#5a8ae0" stroke-width="1"/><path d="M1 2.200h12" stroke="#c4d8f8" stroke-width="2.400"/><path d="M4.500 3.500v10M9.500 3.500v10M1 6.500h12M1 9.500h12" stroke="#9cbcf0" stroke-width="1"/></svg>
<span class="tt" style="left:84px;top:72.5px;">2层视图 （剖切框）</span>
<div class="cb" style="left:63px;top:104px"></div>
<svg class="abs" style="left:85px;top:106.5px" width="11" height="11" viewBox="0 0 11 11"><rect x="0" y="0" width="4.500" height="3.500" fill="#f0f0f0"/><rect x="6" y="0" width="5" height="3.500" fill="#f0f0f0"/><rect x="0" y="5" width="11" height="6" fill="#f0f0f0"/></svg>
<span class="tt" style="left:104px;top:104.5px;">模板图</span>
<div class="cb" style="left:63px;top:136px"></div>
<svg class="abs" style="left:85px;top:138.5px" width="11" height="11" viewBox="0 0 11 11"><rect x="0" y="0" width="4.500" height="3.500" fill="#f0f0f0"/><rect x="6" y="0" width="5" height="3.500" fill="#f0f0f0"/><rect x="0" y="5" width="11" height="6" fill="#f0f0f0"/></svg>
<span class="tt" style="left:104px;top:136.5px;">模板图_1</span>
<div class="cb" style="left:63px;top:168px"></div>
<svg class="abs" style="left:83px;top:168.0px" width="14" height="15" viewBox="0 0 14 15"><path d="M7 0l7 3.500v8L7 15 0 11.500v-8z" fill="#f0f0f0"/><path d="M7 3.500v3.200M7 6.700l-6 3M7 6.700l6 3M7 8.500v6" stroke="#262626" stroke-width="1.200" fill="none"/><circle cx="7" cy="3" r="1.100" fill="#262626"/></svg>
<span class="tt" style="left:104px;top:168.5px;">三维图</span>
<svg class="abs" style="left:27.2px;top:204.2px" width="6" height="6" viewBox="0 0 7 7"><path d="M7 0v7H0z" fill="#f0f0f0"/></svg>
<div class="cb" style="left:43px;top:200px"></div>
<svg class="abs" style="left:63px;top:200.5px" width="14" height="14" viewBox="0 0 14 14"><rect x=".5" y=".5" width="13" height="13" fill="#f6f9ff" stroke="#5a8ae0" stroke-width="1"/><path d="M1 2.200h12" stroke="#c4d8f8" stroke-width="2.400"/><path d="M4.500 3.500v10M9.500 3.500v10M1 6.500h12M1 9.500h12" stroke="#9cbcf0" stroke-width="1"/></svg>
<span class="tt" style="left:84px;top:200.5px;">2层视图_1 （剖切框）</span>
<div class="cb" style="left:63px;top:232px"></div>
<svg class="abs" style="left:83px;top:232.0px" width="14" height="15" viewBox="0 0 14 15"><path d="M7 0l7 3.500v8L7 15 0 11.500v-8z" fill="#f0f0f0"/><path d="M7 3.500v3.200M7 6.700l-6 3M7 6.700l6 3M7 8.500v6" stroke="#262626" stroke-width="1.200" fill="none"/><circle cx="7" cy="3" r="1.100" fill="#262626"/></svg>
<span class="tt" style="left:104px;top:232.5px;">三维图</span>
<svg class="abs" style="left:7.2px;top:268.2px" width="6" height="6" viewBox="0 0 7 7"><path d="M7 0v7H0z" fill="#f0f0f0"/></svg>
<div class="cb" style="left:23px;top:264px"></div>
<svg class="abs" style="left:43px;top:264.5px;overflow:visible" width="15" height="14" viewBox="0 0 15 14"><rect x="-1" y="2.600" width="6.500" height="2.400" fill="#e03838"/><rect x="7.200" y="0.800" width="6.600" height="12.400" fill="#f0f2fc"/><path d="M8 4h5M8 7.200h5M8 10.400h5" stroke="#b4b8e0" stroke-width="1.500"/></svg>
<span class="tt" style="left:64px;top:264.5px;">1层 （标准层1）</span>
<svg class="abs" style="left:298px;top:262px" width="17" height="16" viewBox="0 0 17 16"><path d="M8.500 0l2.500 5.400 6 .7-4.400 4 1.200 5.900-5.300-3-5.300 3 1.200-5.900L0 6.100l6-.7z" fill="#dcdcdc"/></svg>
<div class="cb" style="left:43px;top:296px"></div>
<svg class="abs" style="left:62px;top:297.0px" width="17" height="13" viewBox="0 0 17 13"><g fill="none" stroke="#d8d8d8" stroke-width="1"><rect x=".5" y=".5" width="4" height="4"/><rect x=".5" y="8" width="4" height="4"/></g><path d="M7 .5h10M7 2.500h10M7 4.500h10M7 8.500h10M7 10.500h10M7 12.500h10" stroke="#d8d8d8" stroke-width="1"/></svg>
<span class="tt" style="left:84px;top:296.5px;">1层 （楼层三维图）</span>
<svg class="abs" style="left:7.2px;top:332.2px" width="6" height="6" viewBox="0 0 7 7"><path d="M7 0v7H0z" fill="#f0f0f0"/></svg>
<div class="cb" style="left:23px;top:328px"></div>
<svg class="abs" style="left:43px;top:328.5px;overflow:visible" width="15" height="14" viewBox="0 0 15 14"><rect x="-1" y="2.600" width="6.500" height="2.400" fill="#e03838"/><rect x="7.200" y="0.800" width="6.600" height="12.400" fill="#f0f2fc"/><path d="M8 4h5M8 7.200h5M8 10.400h5" stroke="#b4b8e0" stroke-width="1.500"/></svg>
<span class="tt" style="left:64px;top:328.5px;">基础面 （基础面）</span>
<svg class="abs" style="left:298px;top:326px" width="17" height="16" viewBox="0 0 17 16"><path d="M8.500 0l2.500 5.400 6 .7-4.400 4 1.200 5.900-5.300-3-5.300 3 1.200-5.900L0 6.100l6-.7z" fill="#dcdcdc"/></svg>
<div class="cb" style="left:43px;top:360px"></div>
<svg class="abs" style="left:62px;top:361.0px" width="17" height="13" viewBox="0 0 17 13"><g fill="none" stroke="#d8d8d8" stroke-width="1"><rect x=".5" y=".5" width="4" height="4"/><rect x=".5" y="8" width="4" height="4"/></g><path d="M7 .5h10M7 2.500h10M7 4.500h10M7 8.500h10M7 10.500h10M7 12.500h10" stroke="#d8d8d8" stroke-width="1"/></svg>
<span class="tt" style="left:84px;top:360.5px;">基础面 （楼层三维图）</span>
<svg class="abs" style="left:7.2px;top:396.2px" width="6" height="6" viewBox="0 0 7 7"><path d="M7 0v7H0z" fill="#f0f0f0"/></svg>
<div class="cb" style="left:23px;top:392px"></div>
<span class="tt" style="left:64px;top:392.5px;">系统三维图</span>
<div class="cb" style="left:43px;top:424px"></div>
<div class="abs" style="left:64px;top:425.0px;width:13px;height:13px;background:linear-gradient(#c8d0de,#a8b2c4);border:1px solid #d0d6e0;box-sizing:border-box"></div>
<span class="tt" style="left:84px;top:424.5px;">全视图</span>
<div class="cb" style="left:23px;top:456px"></div>
<div class="abs" style="left:43px;top:456.5px;width:14px;height:14px;border-radius:50%;background:radial-gradient(circle at 40% 35%,#d8d8d8,#a8a8a8 55%,#6a6a6a)"></div>
<span class="tt" style="left:64px;top:456.5px;">目录</span>
<div class="cb" style="left:23px;top:488px"></div>
<div class="abs" style="left:43px;top:488.5px;width:14px;height:14px;border-radius:50%;background:radial-gradient(circle at 40% 35%,#d8d8d8,#a8a8a8 55%,#6a6a6a)"></div>
<span class="tt" style="left:64px;top:488.5px;">总说明</span>
<div class="cb" style="left:23px;top:520px"></div>
<svg class="abs" style="left:43px;top:520.5px" width="15" height="14" viewBox="0 0 15 14"><rect x=".5" y=".5" width="5.500" height="5.500" fill="#b8c8e8" stroke="#fff" stroke-width=".7"/><rect x="3.500" y="3.500" width="6.500" height="6.500" fill="#e09030" stroke="#f8d8a0" stroke-width=".7"/><rect x="8" y="7.500" width="6" height="6" fill="#b8c8e8" stroke="#fff" stroke-width=".7"/></svg>
<span class="tt" style="left:64px;top:520.5px;">详图</span>
</div>
<div class="lbot">
<svg class="abs" style="left:3px;top:11px" width="32" height="32" viewBox="0 0 32 32"><path d="M5 27L20 10" stroke="#e8a040" stroke-width="4" stroke-linecap="round"/><path d="M17 6l6-2 6 6-3 2-3-3-3 3z" fill="#d8dce4" stroke="#f4f4f4" stroke-width=".8"/><path d="M27 27L12 11" stroke="#c8ccd4" stroke-width="3.500" stroke-linecap="round"/><path d="M4 9a5 5 0 016-6l-3 3 1 3 3 1 3-3a5 5 0 01-6 6z" fill="#e0e4ea"/></svg>
<div class="lbb" style="left:47px;width:122px"><div class="abs" style="left:93px;top:0;width:1px;height:31px;background:#5c5c5c"></div>
<div class="abs" style="left:9px;top:5px;width:21px;height:21px;border-radius:50%;background:conic-gradient(#e85050,#e8a030,#e0d030,#60c040,#30b0d0,#5060e0,#a050d0,#e85050)"></div><div class="abs" style="left:15px;top:11px;width:9px;height:9px;border-radius:50%;background:#484848"></div>
<span class="bt" style="left:37.500px;top:8px">视觉样式</span>
<svg class="abs" style="left:101px;top:8.500px" width="12.500" height="14.500" viewBox="0 0 14 16"><path d="M7 1l6 8H9.500v6h-5V9H1z" fill="#5aa8f0" stroke="#c8e4ff" stroke-width=".8"/></svg></div>
<div class="lbb" style="left:185px;width:122px"><div class="abs" style="left:93px;top:0;width:1px;height:31px;background:#5c5c5c"></div>
<svg class="abs" style="left:11px;top:5px" width="19" height="21" viewBox="0 0 19 21"><rect x=".5" y=".5" width="18" height="20" rx="1.500" fill="#8cc63c" stroke="#b8e070"/><rect x="3.500" y="4" width="12" height="9" fill="#e8f4ff" stroke="#fff" stroke-width=".8"/><path d="M4 12l3.500-4 2.500 3 2-2 3 3z" fill="#6aa0e0"/></svg>
<span class="bt" style="left:37.500px;top:8px">底图管理</span>
<svg class="abs" style="left:101px;top:8.500px" width="12.500" height="14.500" viewBox="0 0 14 16"><path d="M7 1l6 8H9.500v6h-5V9H1z" fill="#5aa8f0" stroke="#c8e4ff" stroke-width=".8"/></svg></div>
</div>
</div>
<div id="vp">
<svg class="abs" style="left:1px;top:1px" width="1600" height="742" viewBox="320 208 1600 742" font-family="Liberation Sans, Noto Sans CJK SC, sans-serif">
<text x="323" y="225" font-size="12.600" font-weight="500" fill="#090c10" letter-spacing=".2">[−][自定义视图][概念]</text>
<polygon points="390,583 675,464 779.500,619.500" fill="#c2c28a"/>
<polygon points="675,464 693,455.500 978,531.500 779.500,619.500" fill="#9a9e8c"/>
<polygon points="390,583 779.500,619.500 780,627 390,589.500" fill="#bcbc8c"/>
<polygon points="779.500,619.500 978,531.500 978.500,539 780,627" fill="#5c64a8"/>
<path d="M560 512.500L675 465" stroke="#e6e6cc" stroke-width="1.200" fill="none"/>
<path d="M390 583.500L779.500 620" stroke="#e4e8dc" stroke-width="1.100" stroke-dasharray="3 1.500" fill="none"/>
<path d="M780 620.500L978 532.500" stroke="#2a7078" stroke-width="1.400" fill="none"/><path d="M780 620L978 532" stroke="#e8ece0" stroke-width="1" stroke-dasharray="1 3.500" fill="none"/>
<g fill="none" stroke="#fafaf6" stroke-linejoin="round"><path d="M390 583L693 455.500 978 531.500" stroke-width="1.600"/><path d="M390 583v6.500L780 627 978.500 539V531.500" stroke-width="1.800"/><path d="M675 464L779.500 619.500" stroke-width="1"/><path d="M779.800 620v6.500" stroke-width="1"/></g>
<g stroke="#c00000" fill="none" stroke-width="2.600"><path d="M580 607.500L674 466.500"/><path d="M660 472.500L674.500 465 672.500 481" stroke-width="2.300" stroke-linecap="round" stroke-linejoin="round"/></g>
<g stroke="#c00000" fill="none" stroke-width="2.400"><path d="M582 606.500L665 570.500" stroke-dasharray="2.500 2.500"/><path d="M651.700 568L668 569.200 657.800 582" stroke-width="2.200" stroke-linecap="round" stroke-linejoin="round"/></g>
<text x="572.500" y="644" font-size="23.500" font-weight="350" fill="#ffff00">坡度</text>
<text x="501" y="342" font-size="24" font-weight="bold" fill="#ffff00">轮廓线:</text>
<text x="501" y="385" font-size="24" font-weight="bold" fill="#ffff00">支持定义每条边的坡度值</text>
<text x="1240" y="342" font-size="24" font-weight="bold" fill="#ffff00">通用轮廓线:</text>
<text x="1240" y="385" font-size="24" font-weight="bold" fill="#ffff00">支持定义面标高、边标高、点标高</text>
<g stroke="#2a6a70" stroke-width="1.100" stroke-dasharray="1.500 1.500" fill="none"><path d="M1309 515.500L1400 524.700"/><path d="M1082 600L1506 641"/></g>
<polygon points="1081,585 1280,496 1351,546 1294,573 1188,658.500" fill="#9a9e8c"/>
<polygon points="1296,579 1371,585.600 1191.500,665" fill="#424ea2"/>
<polygon points="1188,658.500 1294,573 1296,579 1190,666" fill="#bcbc94"/>
<polygon points="1081,585 1188,658.500 1189,666.500 1082,591.500" fill="#bcbc94"/>
<polygon points="1294,573 1495.600,483.500 1597.700,494.300 1400,582.300" fill="#adad8a"/>
<polygon points="1294,573 1400,582.300 1399.500,588 1296,579" fill="#d0d0a8"/>
<polygon points="1400,582.300 1597.700,494.300 1705.600,553.400 1506.200,640.200" fill="#9a9e8c"/>
<polygon points="1400,582.300 1506.200,640.200 1506.200,647.800 1399.500,588" fill="#bcbc94"/>
<polygon points="1506.200,640.200 1705.600,553.400 1705.600,559.500 1506.200,647.800" fill="#6870b0"/>
<path d="M1100 602L1243 616" stroke="#4a8a88" stroke-width="1" stroke-dasharray="1.500 1.500" fill="none"/>
<path d="M1507 641L1705 554.500" stroke="#2a7078" stroke-width="1.400" fill="none"/><path d="M1507 640.500L1705 554" stroke="#dfe6da" stroke-width="1" stroke-dasharray="1 3.500" fill="none"/>
<g fill="none" stroke="#fafaf6" stroke-linejoin="round"><path d="M1188 658.500L1081 585 1280 496 1351 546" stroke-width="1.600"/><path d="M1294 573L1495.600 483.500 1597.700 494.300 1705.600 553.400" stroke-width="1.600"/><path d="M1188 658.500L1294 573 1400 582.300 1506.200 640.200" stroke-width="1.100"/><path d="M1400 582.300L1597.700 494.300" stroke-width="1.100"/><path d="M1081 585l1 6.500L1189 666.500 1371 585.600" stroke-width="1.700"/><path d="M1296 579L1399.500 588 1506.200 647.800 1705.600 559.500V553.400" stroke-width="1.700"/><path d="M1191 664L1296 579" stroke-width="1"/><path d="M1506.200 640.200v7" stroke-width="1"/></g>
<path d="M1147.3 519h106.500" stroke="#c00000" stroke-width="1.600"/><polygon points="1147.3,518.4 1195.8,518.4 1172.0,542.4" fill="#c00000"/>
<path d="M1424.5 509.7h106.500" stroke="#c00000" stroke-width="1.600"/><polygon points="1424.5,509.09999999999997 1473.0,509.09999999999997 1449.2,533.1" fill="#c00000"/>
<path d="M1572.4 573.7h106.500" stroke="#c00000" stroke-width="1.600"/><polygon points="1572.4,573.1 1620.9,573.1 1597.1000000000001,597.1" fill="#c00000"/>
<path d="M1238.8 665h107" stroke="#c00000" stroke-width="1.600"/><polygon points="1238.8,665.6 1287.3,665.6 1263.8,641.5" fill="#c00000"/>
<text x="1153" y="511" font-size="23.500" font-weight="350" fill="#ffff00">边标高</text>
<text x="1426.5" y="501.5" font-size="23.500" font-weight="350" fill="#ffff00">面标高</text>
<text x="1578.5" y="565.5" font-size="23.500" font-weight="350" fill="#ffff00">边标高</text>
<text x="1243" y="692" font-size="23.500" font-weight="350" fill="#ffff00">边标高</text>
<g stroke-linecap="round" fill="none"><path d="M372 894.500L390 889.800" stroke="#74742e" stroke-width="5.500"/><path d="M369.200 852.500V896" stroke="#94943a" stroke-width="6.400"/><path d="M370.200 852.500V894" stroke="#c4c468" stroke-width="1.600"/><path d="M370 898.500L412.500 903" stroke="#94943a" stroke-width="5.600"/><path d="M371 897.500L412 901.800" stroke="#d0d078" stroke-width="1.600"/></g>
<g fill="#c8c81e" font-size="17.800" font-weight="300" font-family="Noto Sans CJK SC, sans-serif"><text x="367" y="849" textLength="13.400" lengthAdjust="spacingAndGlyphs">Z</text><text x="386.800" y="886.200" textLength="13" lengthAdjust="spacingAndGlyphs" font-size="16.800">Y</text><text x="410" y="899.600" textLength="12.800" lengthAdjust="spacingAndGlyphs" font-size="16.800">X</text></g>
<text x="1120" y="916.500" font-size="17.400" fill="#fff" text-anchor="middle" font-weight="bold" font-family="Liberation Sans, Noto Sans CJK SC, sans-serif" letter-spacing="0.400">当前视图：视图_2层体系0_2层 视图_2层</text>
<text x="1120" y="935.500" font-size="17.400" fill="#fff" text-anchor="middle" font-weight="bold" font-family="Liberation Sans, Noto Sans CJK SC, sans-serif" letter-spacing="0.400">当前楼层：体系0_标准层2_H=3.000m</text>
<g stroke="#f0f0f0" fill="none"><path d="M1860 225.500h9" stroke-width="2.400"/><rect x="1881" y="219.500" width="6" height="6" stroke-width="1.600"/><path d="M1883 218h6v6" stroke-width="1.300"/><path d="M1901 218.500l7 7M1908 218.500l-7 7" stroke-width="1.800"/></g>
<ellipse cx="1838" cy="344.800" rx="66" ry="18.200" fill="#3c444f"/><ellipse cx="1838" cy="340" rx="52" ry="12.500" fill="#212830"/><ellipse cx="1838" cy="338" rx="38" ry="8" fill="#1a2027"/>
<polygon points="1805,292 1825,286 1869,288 1851,295" fill="#c4c6ca"/><polygon points="1805,292 1851,295 1851,345 1805,339" fill="#b2b4b8"/><polygon points="1851,295 1869,288 1869,331 1851,345" fill="#a4a6aa"/><rect x="1842" y="303" width="9" height="33" fill="#a0a4ac" opacity=".8"/><path d="M1851 295v50" stroke="#6a6e76" stroke-width="1"/>
<text x="1828" y="327" font-size="24" fill="#4a4e56" text-anchor="middle" font-family="Noto Serif CJK SC, serif">前</text>
<text x="1860" y="322" font-size="17" fill="#4a4e56" text-anchor="middle" font-family="Noto Serif CJK SC, serif" transform="translate(1860 316) skewY(-20) scale(.6 1) translate(-1860 -316)">左</text>
<g fill="#b4b8c0" font-size="13" font-family="Noto Serif CJK SC, serif" text-anchor="middle"><text transform="translate(1806 361) rotate(-12) scale(1.500 .75)">南</text><text transform="translate(1897 351) rotate(18) scale(1.200 .75)">东</text><text font-size="9" transform="translate(1786 334) rotate(-20) scale(1.500 .6)">西</text></g>
<rect x="1814.500" y="401.500" width="47" height="16" rx="3.500" fill="#9a9caa" stroke="#b4b6c2" stroke-width="1"/><text x="1819" y="413.300" font-size="10.500" fill="#4e5260">WCS</text><path d="M1848 406.500h7l-3.500 4z" fill="none" stroke="#c4c6d0" stroke-width="1"/>
</svg>
</div>
<div id="cmd">
<svg class="abs" style="left:3.500px;top:5px" width="18" height="5" viewBox="0 0 18 5" fill="#f0f0f0"><rect x="0.0" y="0" width="1.3" height="1.3"/><rect x="0.0" y="2.6" width="1.3" height="1.3"/><rect x="2.6" y="0" width="1.3" height="1.3"/><rect x="2.6" y="2.6" width="1.3" height="1.3"/><rect x="5.2" y="0" width="1.3" height="1.3"/><rect x="5.2" y="2.6" width="1.3" height="1.3"/><rect x="7.8" y="0" width="1.3" height="1.3"/><rect x="7.8" y="2.6" width="1.3" height="1.3"/><rect x="10.4" y="0" width="1.3" height="1.3"/><rect x="10.4" y="2.6" width="1.3" height="1.3"/><rect x="13.0" y="0" width="1.3" height="1.3"/><rect x="13.0" y="2.6" width="1.3" height="1.3"/><rect x="15.6" y="0" width="1.3" height="1.3"/><rect x="15.6" y="2.6" width="1.3" height="1.3"/></svg>
<svg class="abs" style="left:6px;top:15px" width="10" height="10" viewBox="0 0 10 10"><path d="M1 1l8 8M9 1L1 9" stroke="#e8e8e8" stroke-width="1.900"/></svg>
<svg class="abs" style="left:4px;top:36px" width="16" height="16" viewBox="0 0 16 16"><path d="M2 14.500L9.500 7" stroke="#e8e8e8" stroke-width="2.400" stroke-linecap="round"/><path d="M14.500 4.500l-2.500 2.500-2.500-.5-.5-2.500L11.500 1.500a4 4 0 103 3z" fill="#e8e8e8"/></svg>
<div class="hist"><span class="t" style="left:3px;top:4.500px;color:#000;font-size:13px;letter-spacing:.9px">命令:</span><span class="t" style="left:3px;top:20px;color:#000;font-size:13px;letter-spacing:.9px">命令:</span></div>
<div class="inp"><svg class="abs" style="left:3px;top:4px" width="16" height="13" viewBox="0 0 16 13"><rect x=".5" y=".5" width="15" height="12" fill="#f4f4f4" stroke="#555"/><rect x=".5" y=".5" width="15" height="2.500" fill="#666"/><path d="M3 5.500l2.500 2L3 9.500M7 10h3.500" fill="none" stroke="#333" stroke-width="1"/></svg><i class="tri dk" style="left:22px;top:9px"></i><span class="t" style="left:37px;top:2px;color:#8c8c8c;font-style:italic;font-size:12.500px;letter-spacing:.6px">键入命令</span></div>
</div>
<div id="status">
<div class="mtab on" style="left:12px;width:44px"></div><span class="t" style="left:22px;top:2.500px;color:#fff;font-weight:bold;font-size:12px">模型</span>
<div class="mtab" style="left:60px;width:48px"></div><span class="t" style="left:69px;top:2.500px;color:#c0c4cc;font-size:12px">布局1</span>
<div class="mtab" style="left:114px;width:48px"></div><span class="t" style="left:123px;top:2.500px;color:#c0c4cc;font-size:12px">布局2</span>
<div class="mtab" style="left:170px;width:22px"></div><svg class="abs" style="left:176px;top:5.500px" width="9" height="9" viewBox="0 0 9 9"><path d="M4.500 0v9M0 4.500h9" stroke="#b0b4bc" stroke-width="1.500"/></svg>
<div class="sb"><div class="abs" style="left:0;top:-.5px">
<span class="t" style="left:32px;top:7px;color:#fff;font-size:12px;letter-spacing:.1px">7268.5183, 62564.0456, 0.0000</span>
<svg class="abs" style="left:211px;top:5px" width="24" height="17" viewBox="0 0 24 17"><path d="M5 1.500h18l-4.500 14H.8z" fill="#c4c6ea" stroke="#8a8cd0"/><text x="12" y="13" font-size="11.500" font-style="italic" fill="#3838c0" text-anchor="middle" font-family="Noto Sans CJK SC, sans-serif">板</text></svg>
<svg class="abs" style="left:234px;top:3px" width="22" height="22" viewBox="0 0 22 22"><rect width="22" height="22" fill="#5a5e68"/><path d="M0 5.500h22M0 11h22M0 16.500h22M5.500 0v22M11 0v22M16.500 0v22" stroke="#8a8e98" stroke-width=".7"/><path d="M9 5l8 8-4 .3 2.200 4.200-2 1-2.200-4.300L9 17z" fill="#b8bcc4"/></svg>
<svg class="abs" style="left:259px;top:4px" width="20" height="20" viewBox="0 0 20 20"><rect x=".5" y=".5" width="19" height="19" fill="#a0a0a0" stroke="#d0d0d0"/><rect x="3" y="3" width="14" height="9" fill="#e8e8e8"/><path d="M5 6h4M11 6h4M5 9h10" stroke="#666" stroke-width="1.200"/><rect x="3" y="14" width="14" height="3" fill="#888"/></svg>
<i class="vs" style="left:282px"></i>
<span class="t" style="left:288px;top:6px;color:#fff;font-size:12px">模型</span>
<i class="vs" style="left:318px"></i>
<svg class="abs" style="left:321px;top:6px" width="16" height="16" viewBox="0 0 16 16"><path d="M1 5.500h14M1 10.500h14M5.500 1v14M10.500 1v14" stroke="#f0f0f0" stroke-width="1.300"/></svg>
<svg class="abs" style="left:346px;top:7px" width="14" height="14" viewBox="0 0 14 14"><g fill="#f0f0f0"><rect x="1" y="1" width="2" height="2"/><rect x="6" y="1" width="2" height="2"/><rect x="11" y="1" width="2" height="2"/><rect x="1" y="6" width="2" height="2"/><rect x="6" y="6" width="2" height="2"/><rect x="11" y="6" width="2" height="2"/><rect x="1" y="11" width="2" height="2"/><rect x="6" y="11" width="2" height="2"/><rect x="11" y="11" width="2" height="2"/></g></svg>
<i class="tri s" style="left:370px;top:13px"></i>
<i class="vs" style="left:384px"></i>
<svg class="abs" style="left:388px;top:5px" width="18" height="18" viewBox="0 0 18 18"><path d="M6 10V2.500h10v5h-4.500" fill="none" stroke="#f0f0f0" stroke-width="1.400"/><rect x="1.500" y="10" width="6.500" height="6.500" fill="#f0f0f0"/></svg>
<i class="vs" style="left:410px"></i>
<svg class="abs" style="left:413px;top:5px" width="20" height="18" viewBox="0 0 20 18"><path d="M5 2v8M1 6h8" stroke="#f0f0f0" stroke-width="1.400"/><rect x="8" y="12" width="9" height="4" fill="#f0f0f0"/></svg>
<div class="abs" style="left:436px;top:3px;width:22px;height:22px;background:#5a8cc8"></div>
<svg class="abs" style="left:438px;top:5px" width="18" height="18" viewBox="0 0 18 18"><path d="M3 1v15h14" fill="none" stroke="#fff" stroke-width="1.600"/><path d="M3 10h6v6" fill="none" stroke="#fff" stroke-width="1.300"/></svg>
<svg class="abs" style="left:461px;top:5px" width="18" height="18" viewBox="0 0 18 18"><circle cx="8" cy="10" r="6" fill="none" stroke="#f0f0f0" stroke-width="1.400"/><path d="M8 10L16 3M8 10h7" stroke="#f0f0f0" stroke-width="1.300"/></svg>
<i class="tri s" style="left:486px;top:13px"></i>
<svg class="abs" style="left:500px;top:4px" width="16" height="20" viewBox="0 0 16 20"><path d="M2 1l11 18" stroke="#e03030" stroke-width="1.500"/><path d="M8 1v14M8 11l-5 6" stroke="#30c050" stroke-width="1.300" fill="none"/><circle cx="8" cy="11" r="1.500" fill="#fff"/></svg>
<i class="tri s" style="left:526px;top:13px"></i>
<div class="abs" style="left:541px;top:3px;width:22px;height:22px;background:#5a8cc8"></div>
<svg class="abs" style="left:543px;top:5px" width="18" height="18" viewBox="0 0 18 18"><path d="M2 15L15 4M2 15h14" fill="none" stroke="#fff" stroke-width="1.600"/></svg>
<div class="abs" style="left:565px;top:3px;width:22px;height:22px;background:#5a8cc8"></div>
<svg class="abs" style="left:567px;top:5px" width="18" height="18" viewBox="0 0 18 18"><rect x="4" y="4" width="11" height="12" fill="none" stroke="#fff" stroke-width="1.600"/><rect x="1.500" y="1.500" width="4" height="4" fill="#5a8cc8" stroke="#fff" stroke-width="1.200"/></svg>
<i class="tri s" style="left:591px;top:13px"></i>
<i class="vs" style="left:603px"></i>
<svg class="abs" style="left:608px;top:6px" width="16" height="16" viewBox="0 0 16 16"><path d="M1 2h14M1 6h9M1 10h14M1 14h7" stroke="#f0f0f0" stroke-width="1.600"/></svg>
<i class="vs" style="left:629px"></i>
<svg class="abs" style="left:633px;top:4px" width="20" height="20" viewBox="0 0 20 20"><path d="M4 1v6M1 4h6" stroke="#f0f0f0" stroke-width="1.300"/><rect x="5" y="6" width="9" height="9" fill="none" stroke="#f0f0f0" stroke-width="1.200"/><rect x="8.500" y="9.500" width="10" height="10" fill="#6cd080" stroke="#a0e8b0"/></svg>
<svg class="abs" style="left:657px;top:5px" width="20" height="18" viewBox="0 0 20 18"><path d="M6 6l5-4h8l-5 4zM6 6h8v9H6zM14 6l5-4v9l-5 4" fill="none" stroke="#f0f0f0" stroke-width="1.200"/><rect x="1" y="12" width="4" height="4" fill="none" stroke="#f09040" stroke-width="1.200"/></svg>
<i class="tri s" style="left:684px;top:13px"></i>
<i class="vs" style="left:697px"></i>
<svg class="abs" style="left:702px;top:5px" width="18" height="18" viewBox="0 0 18 18"><path d="M4 2v12h12M4 2l-2.500 3M4 2l2.500 3M16 14l-3-2.500M16 14l-3 2.500" fill="none" stroke="#f0f0f0" stroke-width="1.400"/><path d="M10 3l-2 4h3l-2 4" fill="none" stroke="#f0f0f0" stroke-width="1.200"/></svg>
<svg class="abs" style="left:724px;top:5px" width="20" height="18" viewBox="0 0 20 18"><rect x="3" y="4" width="12" height="11" fill="none" stroke="#6ab8f0" stroke-width="1.300" stroke-dasharray="3 2"/><path d="M7 2h10v11" fill="none" stroke="#f0f0f0" stroke-width="1.300"/></svg>
<i class="tri s" style="left:750px;top:13px"></i>
<div class="abs" style="left:764px;top:3px;width:22px;height:22px;background:#5a8cc8"></div>
<svg class="abs" style="left:766px;top:5px" width="18" height="18" viewBox="0 0 18 18"><path d="M9 2L2 14h14z" fill="none" stroke="#fff" stroke-width="1.300"/><circle cx="9" cy="9.500" r="3" fill="none" stroke="#fff" stroke-width="1.200"/><circle cx="9" cy="2.500" r="1.500" fill="#fff"/><circle cx="2.500" cy="14" r="1.500" fill="#fff"/><circle cx="15.500" cy="14" r="1.500" fill="#fff"/></svg>
<i class="tri s" style="left:791px;top:13px"></i>
<i class="vs" style="left:803px"></i>
<div class="abs" style="left:807px;top:3px;width:22px;height:22px;background:#5a8cc8"></div>
<svg class="abs" style="left:808px;top:4px" width="20" height="20" viewBox="0 0 20 20"><path d="M8 1l4 12 5 5-7-4-8 5 5-7z" fill="#fff"/><circle cx="15.500" cy="4.500" r="2" fill="none" stroke="#fff" stroke-width="1.100"/></svg>
<svg class="abs" style="left:833px;top:4px" width="20" height="20" viewBox="0 0 20 20"><path d="M8 2l3 11 5 5-7-4-7 5 5-7z" fill="#e0e0e0"/><path d="M15 1l-2 4h2.500l-2 4" fill="none" stroke="#e0e0e0" stroke-width="1.100"/></svg>
<svg class="abs" style="left:858px;top:4px" width="18" height="20" viewBox="0 0 18 20"><path d="M9 3l3 10 5 5-8-4-8 4 5-5z" fill="#e0e0e0"/></svg>
<span class="t" style="left:881px;top:7px;color:#fff;font-size:11.500px;letter-spacing:-.2px">1:1 / 100%</span>
<i class="tri s" style="left:940px;top:13px"></i>
<i class="vs" style="left:952px"></i>
<svg class="abs" style="left:957px;top:5px" width="18" height="18" viewBox="0 0 18 18"><g fill="#e8e8e8"><circle cx="9" cy="9" r="5.500"/><use href="#gt"/><use href="#gt" transform="rotate(45 9 9)"/><use href="#gt" transform="rotate(90 9 9)"/><use href="#gt" transform="rotate(135 9 9)"/></g><circle cx="9" cy="9" r="2.400" fill="#3b4453"/></svg>
<i class="tri s" style="left:983px;top:13px"></i>
<i class="vs" style="left:994px"></i>
<svg class="abs" style="left:999px;top:5px" width="18" height="18" viewBox="0 0 18 18"><path d="M9 1v16M1 9h16" stroke="#f0f0f0" stroke-width="1.800"/></svg>
<i class="vs" style="left:1022px"></i>
<svg class="abs" style="left:1029px;top:5px" width="10" height="18" viewBox="0 0 10 18"><rect x="1" y="1" width="5" height="16" fill="#e0e0e0"/><path d="M6 3h3M6 6h3M6 9h3M6 12h3M6 15h3" stroke="#e0e0e0" stroke-width="1.200"/></svg>
<span class="t" style="left:1052px;top:6px;color:#fff;font-size:12px">小数</span>
<i class="tri s" style="left:1108px;top:13px"></i>
<i class="vs" style="left:1120px"></i>
<svg class="abs" style="left:1126px;top:5px" width="14" height="18" viewBox="0 0 14 18"><rect x="1" y="1" width="12" height="16" rx="1" fill="none" stroke="#f0f0f0" stroke-width="1.300"/><path d="M3 5h2M7 5h4M3 9h2M7 9h4M3 13h2M7 13h4" stroke="#f0f0f0" stroke-width="1.300"/></svg>
<i class="vs" style="left:1146px"></i>
<svg class="abs" style="left:1151px;top:4px" width="20" height="20" viewBox="0 0 20 20"><path d="M2 14V3h14v6" fill="none" stroke="#f0f0f0" stroke-width="1.400"/><path d="M2 4h14" stroke="#f0f0f0" stroke-width="2.400"/><rect x="9" y="13" width="7" height="5" fill="#f0f0f0"/><path d="M13 13v-2a2 2 0 014 0" fill="none" stroke="#f0f0f0" stroke-width="1.200"/></svg>
<i class="tri s" style="left:1176px;top:13px"></i>
<i class="vs" style="left:1188px"></i>
<svg class="abs" style="left:1192px;top:4px" width="20" height="20" viewBox="0 0 20 20"><rect x="1.500" y="1.500" width="6" height="6" fill="none" stroke="#f0f0f0" stroke-width="1.300"/><circle cx="14.500" cy="7.500" r="3" fill="none" stroke="#f0f0f0" stroke-width="1.300"/><path d="M7 11l3.500 6.500h-7z" fill="none" stroke="#f0f0f0" stroke-width="1.300"/></svg>
<div class="abs" style="left:1217px;top:3px;width:22px;height:22px;background:#5a8cc8"></div>
<svg class="abs" style="left:1218px;top:4px" width="20" height="20" viewBox="0 0 20 20"><circle cx="10" cy="10" r="8" fill="#a8c4ec" stroke="#fff" stroke-width="1.400"/><path d="M10 10l5-5" stroke="#fff" stroke-width="1.400"/></svg>
<svg class="abs" style="left:1243px;top:3px" width="22" height="22" viewBox="0 0 22 22"><path d="M5 1v8M1 5h8" stroke="#f0f0f0" stroke-width="1.200"/><path d="M6 4h9l4 4v11H6z" fill="#4a80d0"/><rect x="4" y="10" width="8" height="7" fill="#f0b030"/><path d="M10 17l3 3 6-7" fill="none" stroke="#40c050" stroke-width="2.200"/></svg>
<i class="vs" style="left:1267px"></i>
<svg class="abs" style="left:1273px;top:6px" width="18" height="16" viewBox="0 0 18 16"><rect x="1" y="1" width="16" height="13" fill="none" stroke="#f0f0f0" stroke-width="1.400"/><path d="M4 11l3-3M4 11h3M4 11V8M14 4l-3 3M14 4h-3M14 4v3" stroke="#f0f0f0" stroke-width="1.200" fill="none"/></svg>
<svg class="abs" style="left:1296px;top:6px" width="18" height="16" viewBox="0 0 18 16"><path d="M1 2h16M1 8h16M1 14h16" stroke="#f0f0f0" stroke-width="2"/></svg>
</div></div></div>
</body></html>
